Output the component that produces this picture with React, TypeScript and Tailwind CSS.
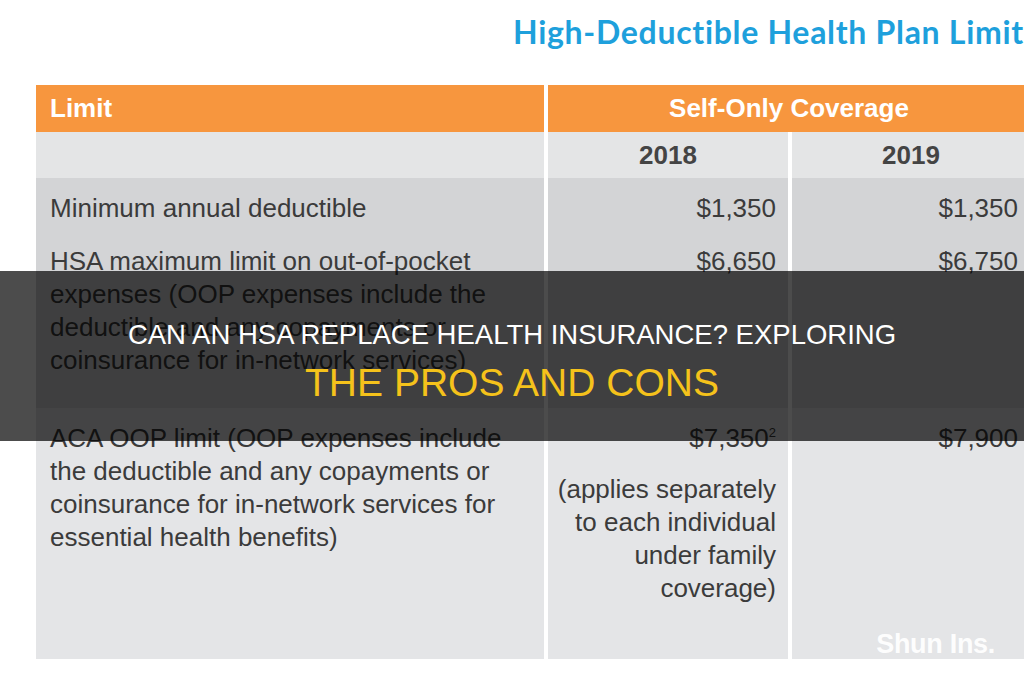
import React from "react";

const body = "font-['Liberation_Sans',Arial,sans-serif]";

export default function App() {
  return (
    <div className={`relative w-[1024px] h-[680px] overflow-hidden bg-white ${body}`}>
      {/* Title */}
      <div className="h-[85px] pl-[513px] pt-[14px]">
        <div className="whitespace-nowrap font-['Lato',sans-serif] font-bold text-[32px] leading-[36px] tracking-[0.7px] text-[#1ea0dc]">
          High-Deductible Health Plan Limits
        </div>
      </div>

      {/* Table */}
      <div className="ml-[36px] w-[994px] flex flex-col text-[#3b3b3b]">
        {/* header */}
        <div className="flex h-[47px] gap-[4px]">
          <div className="w-[508px] bg-[#f7963e] flex items-center pl-[14px] text-white font-bold text-[26px]">
            Limit
          </div>
          <div className="flex-1 bg-[#f7963e] flex items-center justify-center text-white font-bold text-[26px]">
            Self-Only Coverage
          </div>
        </div>
        {/* years */}
        <div className="flex h-[46px] gap-[4px]">
          <div className="w-[508px] bg-[#e4e5e6]" />
          <div className="w-[240px] bg-[#e4e5e6] flex items-center justify-center font-bold text-[26px] text-[#444]">
            2018
          </div>
          <div className="flex-1 bg-[#e4e5e6] flex items-center justify-center font-bold text-[26px] text-[#444]">
            2019
          </div>
        </div>
        {/* min + HSA */}
        <div className="flex h-[230px] gap-[4px] text-[26px] leading-[33px]">
          <div className="w-[508px] bg-[#d3d4d6] pl-[14px] pt-[14px]">
            <div>Minimum annual deductible</div>
            <div className="mt-[20px]">
              HSA maximum limit on out-of-pocket
              <br />
              expenses (OOP expenses include the
              <br />
              deductible and any copayments or
              <br />
              coinsurance for in-network services)
            </div>
          </div>
          <div className="w-[240px] bg-[#d3d4d6] pr-[12px] pt-[14px] text-right">
            <div>$1,350</div>
            <div className="mt-[20px]">$6,650</div>
          </div>
          <div className="flex-1 bg-[#d3d4d6] pr-[12px] pt-[14px] text-right">
            <div>$1,350</div>
            <div className="mt-[20px]">$6,750</div>
          </div>
        </div>
        {/* ACA */}
        <div className="flex h-[251px] gap-[4px] text-[26px] leading-[33px]">
          <div className="w-[508px] bg-[#e4e5e7] pl-[14px] pt-[14px]">
            ACA OOP limit (OOP expenses include
            <br />
            the deductible and any copayments or
            <br />
            coinsurance for in-network services for
            <br />
            essential health benefits)
          </div>
          <div className="w-[240px] bg-[#e4e5e7] pr-[12px] pt-[14px] text-right">
            <div>
              $7,350<span className="relative -top-[10px] text-[13px]">2</span>
            </div>
            <div className="mt-[14px]">
              (applies separately
              <br />
              to each individual
              <br />
              under family
              <br />
              coverage)
            </div>
          </div>
          <div className="flex-1 bg-[#e4e5e7] pr-[12px] pt-[14px] text-right">$7,900</div>
        </div>
      </div>

      {/* Watermark */}
      <div className="absolute right-[29px] top-[631px] font-bold text-[27px] leading-[27px] tracking-[-0.3px] text-white/95">
        Shun Ins.
      </div>

      {/* Overlay */}
      <div className="absolute left-0 top-[271px] w-full h-[170px] bg-black/70 flex flex-col items-center pt-[48px]">
        <div className="whitespace-nowrap text-white text-[27.5px] leading-[32px]">
          CAN AN HSA REPLACE HEALTH INSURANCE? EXPLORING
        </div>
        <div className="mt-[10px] whitespace-nowrap text-[#f5c21b] text-[39px] leading-[44px]">
          THE PROS AND CONS
        </div>
      </div>
    </div>
  );
}
